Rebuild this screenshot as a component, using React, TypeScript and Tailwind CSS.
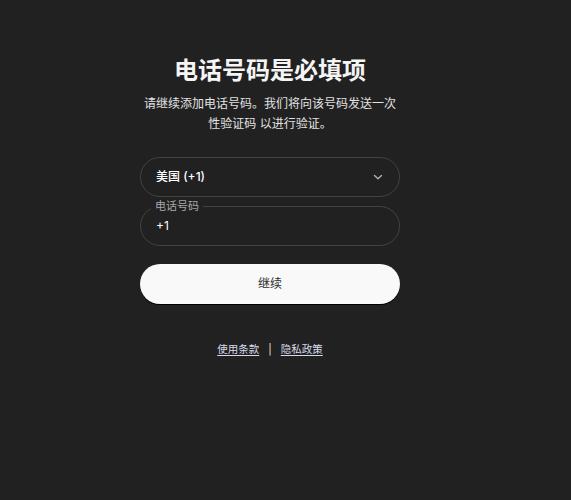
import React from "react";

export default function App() {
  return (
    <div
      className="min-h-[500px] w-full bg-[#212121] text-white"
      style={{ fontFamily: '"Inter", "Noto Sans CJK SC", sans-serif' }}
    >
      <div className="flex justify-center pr-[31px] pt-[55px]">
        <div className="flex w-[260px] flex-col">
          <h1 className="text-center text-[24px] font-bold leading-[32px] text-[#f5f5f5]">
            电话号码是必填项
          </h1>
          <p className="mt-[7px] text-center text-[12px] leading-[20px] text-[#e3e3e3]">
            请继续添加电话号码。我们将向该号码发送一次性验证码 以进行验证。
          </p>

          <button
            type="button"
            className="mt-[23px] flex h-[40px] w-full items-center justify-between rounded-full border border-[#424242] pl-[15px] pr-[16px] text-[12px] font-medium text-white"
          >
            <span>美国 (+1)</span>
            <svg width="10" height="10" viewBox="0 0 10 10" fill="none" className="text-[#b4b4b4]">
              <path d="M1.5 3.5 L5 6.8 L8.5 3.5" stroke="currentColor" strokeWidth="1.3" strokeLinecap="round" strokeLinejoin="round" />
            </svg>
          </button>

          <div className="relative mt-[9px] flex h-[40px] w-full items-center rounded-full border border-[#424242] pl-[15px]">
            <span className="absolute left-[10px] top-[-8px] bg-[#212121] px-[4px] text-[11px] leading-[14px] text-[#a8a8a8]">
              电话号码
            </span>
            <span className="text-[12px] text-white">+1</span>
          </div>

          <button
            type="button"
            className="mt-[18px] flex h-[40px] w-full items-center justify-center rounded-full bg-[#f9f9f9] text-[12px] text-[#2d2d2d] shadow-[0_1px_0_#000]"
          >
            继续
          </button>

          <div className="mt-[38px] flex items-center justify-center gap-[9px] text-[10.5px] text-[#d6dbe8]">
            <a href="#" className="underline underline-offset-2">使用条款</a>
            <span className="text-[#e8e2dc]">|</span>
            <a href="#" className="underline underline-offset-2">隐私政策</a>
          </div>
        </div>
      </div>
    </div>
  );
}
